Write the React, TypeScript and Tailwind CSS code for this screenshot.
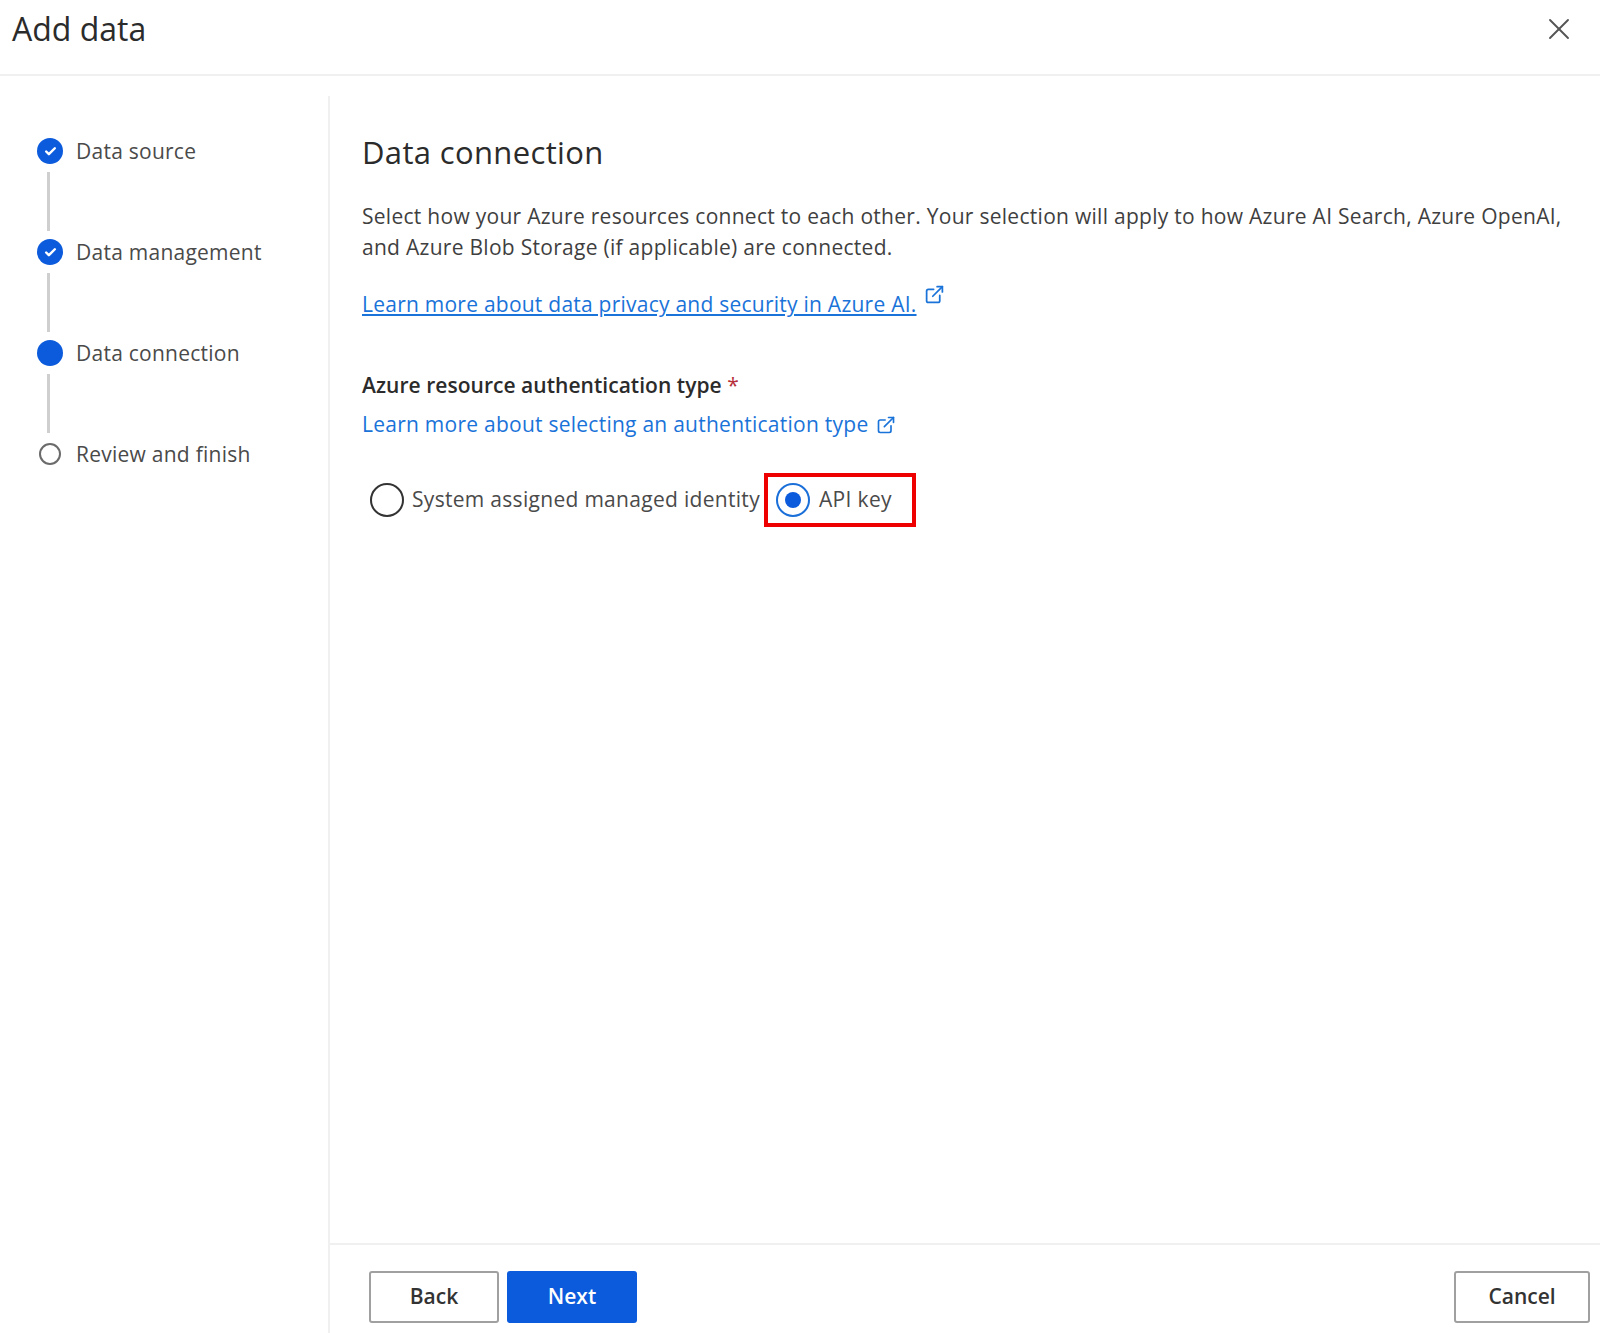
import { X, ExternalLink, Check } from 'lucide-react';

const font = "[font-family:'Open_Sans','Liberation_Sans',sans-serif]";

const steps = [
  { label: 'Data source', state: 'done' },
  { label: 'Data management', state: 'done' },
  { label: 'Data connection', state: 'current' },
  { label: 'Review and finish', state: 'todo' },
];

function StepDot({ state }: { state: string }) {
  if (state === 'done') {
    return (
      <div className="w-[26px] h-[26px] rounded-full bg-[#0b5bdc] flex items-center justify-center">
        <Check size={13} strokeWidth={4.5} className="text-white" />
      </div>
    );
  }
  if (state === 'current') {
    return <div className="w-[26px] h-[26px] rounded-full bg-[#0b5bdc]" />;
  }
  return (
    <div className="w-[26px] h-[26px] flex items-center justify-center">
      <div className="w-[22px] h-[22px] rounded-full border-2 border-[#6b6b6b] bg-white" />
    </div>
  );
}

export default function App() {
  return (
    <div className={`w-[1600px] h-[1333px] bg-white flex flex-col overflow-hidden text-[#333] ${font}`}>
      {/* header */}
      <div className="h-[76px] shrink-0 border-b-2 border-[#f0f0f0] flex items-center justify-between pl-3 pr-[23px] pb-[16px]">
        <h1 className="text-[32px] font-medium text-[#2b2b2b]">Add data</h1>
        <X size={36} strokeWidth={1.25} className="text-[#555]" />
      </div>

      <div className="flex-1 flex pt-[20px] min-h-0">
        {/* stepper */}
        <div className="w-[330px] shrink-0 border-r-2 border-[#f0f0f0] pl-[37px] pt-[42px]">
          {steps.map((s, i) => (
            <div key={s.label}>
              <div className="flex items-center h-[26px] gap-[13px]">
                <StepDot state={s.state} />
                <span className="pt-[2px] text-[21px] tracking-[0.25px] text-[#4a4a4a]">{s.label}</span>
              </div>
              {i < steps.length - 1 && (
                <div className="w-[3px] h-[59px] my-[8px] ml-[10px] bg-[#cfcfcf]" />
              )}
            </div>
          ))}
        </div>

        {/* main */}
        <div className="flex-1 flex flex-col min-w-0">
          <div className="flex-1 pl-[32px] pr-[30px] pt-[34px]">
            <h2 className="text-[31px] leading-[44px] tracking-[0.35px] font-medium text-[#2b2b2b]">Data connection</h2>
            <p className="mt-[27px] text-[21px] leading-[31px] tracking-[0.28px] text-[#3f3f3f]">
              Select how your Azure resources connect to each other. Your selection will apply to how Azure AI Search, Azure OpenAI, and Azure Blob Storage (if applicable) are connected.
            </p>
            <div className="mt-[26px] flex items-start gap-[7px]">
              <a className="text-[21px] leading-[31px] tracking-[0.24px] text-[#1a73d9] underline">
                Learn more about data privacy and security in Azure AI.
              </a>
              <ExternalLink size={21} className="text-[#1a73d9] -mt-[5px]" />
            </div>
            <div className="mt-[50px] text-[21px] leading-[31px] tracking-[0.04px] font-semibold text-[#2b2b2b]">
              Azure resource authentication type <span className="font-normal text-[#b5303a]">*</span>
            </div>
            <div className="mt-[8px] flex items-center gap-[8px]">
              <a className="text-[21px] leading-[31px] tracking-[0.25px] text-[#1a73d9]">
                Learn more about selecting an authentication type
              </a>
              <ExternalLink size={20} className="text-[#1a73d9]" />
            </div>
            <div className="mt-[33px] flex items-center h-[54px] pl-[8px]">
              <div className="w-[34px] h-[34px] rounded-full border-2 border-[#333]" />
              <span className="ml-[8px] text-[21px] tracking-[0.3px] text-[#4a4a4a]">System assigned managed identity</span>
              <div className="ml-[4px] h-[54px] w-[152px] border-[4px] border-[#ee0000] flex items-center pl-[8px] gap-[9px]">
                <div className="w-[34px] h-[34px] rounded-full border-2 border-[#1a6fd9] flex items-center justify-center">
                  <div className="w-[16px] h-[16px] rounded-full bg-[#0b5bdc]" />
                </div>
                <span className="text-[21px] tracking-[0.35px] text-[#4a4a4a]">API key</span>
              </div>
            </div>
          </div>

          {/* footer */}
          <div className="h-[90px] shrink-0 border-t-2 border-[#f0f0f0] flex items-start justify-between pt-[26px] pl-[39px] pr-[10px]">
            <div className="flex gap-[8px]">
              <button className="w-[130px] h-[52px] rounded-[3px] border-2 border-[#a0a0a0] bg-white text-[21px] font-semibold text-[#333]">Back</button>
              <button className="w-[130px] h-[52px] rounded-[3px] bg-[#0b5bdc] text-[21px] font-semibold text-white">Next</button>
            </div>
            <button className="w-[136px] h-[52px] rounded-[3px] border-2 border-[#a0a0a0] bg-white text-[21px] font-semibold text-[#333]">Cancel</button>
          </div>
        </div>
      </div>
    </div>
  );
}
